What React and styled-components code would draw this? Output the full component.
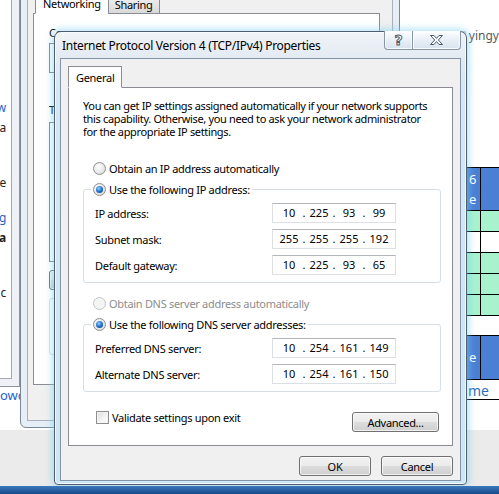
import React from "react";
import styled, { createGlobalStyle } from "styled-components";

const GlobalStyle = createGlobalStyle`
  * { box-sizing: border-box; }
  html, body { margin: 0; padding: 0; background: #ffffff; }
  body {
    font-family: "Noto Sans", "Liberation Sans", sans-serif;
    font-size: 11px;
    letter-spacing: -0.3px;
    color: #000;
  }
`;

const Desktop = styled.div`
  width: 499px;
  height: 494px;
  display: flex;
  flex-direction: column;
  overflow: hidden;
`;

const Workspace = styled.div`
  position: relative;
  flex: 1;
  display: flex;
  flex-direction: column;
  justify-content: flex-end;
  background: #ffffff;
  overflow: hidden;
`;

const GrayStrip = styled.div`
  height: 56px;
  background: #ebebeb;
`;

const Taskbar = styled.div`
  height: 8px;
  background: linear-gradient(#3b79be, #17498a);
`;

/* ---------- far left window ---------- */

const LeftWindow = styled.div`
  position: absolute;
  left: -120px;
  top: -20px;
  width: 140px;
  height: 407px;
  padding: 0 7px 7px 0;
  background: #eef2f6;
  border: 1px solid #8d949c;
`;

const LeftContent = styled.div`
  height: 100%;
  background: #fff;
  border-right: 1px solid #a3a9b0;
  border-bottom: 1px solid #a3a9b0;
  display: flex;
  flex-direction: column;
  align-items: flex-end;
  padding: 120px 5px 0 0;
`;

const Fragment = styled.div`
  margin-top: ${(p) => p.$gap}px;
  height: 14px;
  line-height: 14px;
  font-size: 12px;
  white-space: nowrap;
  color: ${(p) => (p.$link ? "#1e64c8" : "#222")};
  font-weight: ${(p) => (p.$bold ? 700 : 400)};
`;

const BottomLink = styled.div`
  position: absolute;
  left: 0;
  top: 386px;
  font-size: 13px;
  letter-spacing: 0;
  color: #1e64c8;
`;

/* ---------- networking properties window ---------- */

const NetWindow = styled.div`
  position: absolute;
  left: 20px;
  top: -40px;
  width: 380px;
  height: 468px;
  padding: 29px 6px 6px 6px;
  background: #e7eef5;
  border: 1px solid #7a8896;
  border-radius: 6px;
`;

const NetClient = styled.div`
  height: 100%;
  background: #f0f0f0;
  border: 1px solid #a7b1bc;
  padding: 1px 12px 35px 5px;
  display: flex;
  flex-direction: column;
`;

const TabRow = styled.div`
  display: flex;
  align-items: flex-end;
  padding-left: ${(p) => p.$indent ?? 2}px;
  margin-bottom: -1px;
  position: relative;
  z-index: 1;
`;

const Tab = styled.div`
  height: ${(p) => (p.$active ? 22 : 20)}px;
  padding: 0 ${(p) => (p.$active ? 7 : 6)}px;
  display: flex;
  align-items: center;
  border: 1px solid #898c95;
  border-bottom: ${(p) => (p.$active ? "1px solid #fff" : "1px solid #898c95")};
  background: ${(p) =>
    p.$active ? "#fff" : "linear-gradient(#f3f3f3, #e6e6e6 50%, #d9d9d9)"};
  margin-left: ${(p) => (p.$active ? 0 : -1)}px;
  white-space: nowrap;
`;

const NetPanel = styled.div`
  flex: 1;
  background: #fff;
  border: 1px solid #898c95;
  padding: 12px 12px 0 15px;
  display: flex;
  flex-direction: column;
`;

const Caption = styled.div`
  height: 14px;
  line-height: 14px;
  margin-top: ${(p) => p.$gap || 0}px;
  white-space: nowrap;
`;

const ListBox = styled.div`
  height: ${(p) => p.$h}px;
  margin-top: ${(p) => p.$gap}px;
  border: 1px solid #828790;
  background: #fff;
`;

const SmallButtonRow = styled.div`
  display: flex;
  gap: 6px;
  margin-top: 8px;
`;

const GroupOutline = styled.div`
  margin-top: 8px;
  height: 57px;
  border: 1px solid #d5dfe5;
  border-radius: 3px;
`;

/* ---------- right web page ---------- */

const WebPage = styled.div`
  position: absolute;
  left: 400px;
  top: 0;
  right: 0;
  height: 420px;
  background: #fff;
  padding: 29px 0 0 59px;
  display: flex;
  flex-direction: column;
`;

const UserLine = styled.div`
  display: flex;
  align-items: center;
  gap: 3px;
  height: 13px;
  padding-left: 3px;
  color: #5a5a5a;
  font-size: 12px;
  letter-spacing: 0;
  white-space: nowrap;
`;

const UserIcon = styled.span`
  width: 5px;
  height: 10px;
  background: #c9ced6;
  border-radius: 1px;
`;

const Table = styled.div`
  margin: ${(p) => p.$gap}px 0 0 3px;
  border-top: 1px solid #000;
  display: flex;
  flex-direction: column;
`;

const TableRow = styled.div`
  display: grid;
  grid-template-columns: 19px 1fr;
  height: ${(p) => p.$h}px;
  border-bottom: 1px solid #000;
  background: ${(p) => p.$bg};
`;

const Cell = styled.div`
  border-right: ${(p) => (p.$first ? "1px solid #000" : "none")};
  color: #fff;
  font-size: 13px;
  letter-spacing: 0;
  line-height: 20px;
  padding: ${(p) => p.$top ?? 1}px 0 0 7px;
`;

const PageLink = styled.div`
  margin: 4px 0 0 3px;
  padding-left: 6px;
  height: 16px;
  border-bottom: 1px solid #000;
  font-size: 14px;
  letter-spacing: 0;
  line-height: 14px;
  color: #2a6ebb;
`;

/* ---------- TCP/IPv4 dialog ---------- */

const Dialog = styled.div`
  position: absolute;
  left: 54px;
  top: 31px;
  width: 413px;
  height: 454px;
  padding: 0 5px 3px 5px;
  border: 1px solid #4e5f73;
  border-radius: 7px 7px 4px 4px;
  background: linear-gradient(
    180deg,
    #f1f4f8 0px,
    #e3eaf2 26px,
    #d3e7f4 60px,
    #cde6f5 100%
  );
  box-shadow: 0 0 7px 2px rgba(120, 205, 240, 0.55),
    inset 0 0 0 1px rgba(255, 255, 255, 0.75);
  display: flex;
  flex-direction: column;
`;

const TitleBar = styled.div`
  height: 27px;
  display: flex;
  justify-content: space-between;
  align-items: flex-start;
  padding-left: 2px;
`;

const Title = styled.div`
  font-size: 12px;
  line-height: 14px;
  margin-top: 7px;
  color: #000;
  white-space: nowrap;
`;

const CaptionButtons = styled.div`
  display: flex;
  margin-top: -1px;
`;

const CaptionButton = styled.div`
  width: ${(p) => p.$w}px;
  height: 19px;
  border: 1px solid #8696a8;
  border-top: none;
  margin-left: -1px;
  border-radius: ${(p) => (p.$last ? "0 0 4px 0" : "0 0 0 4px")};
  background: linear-gradient(
    180deg,
    rgba(255, 255, 255, 0.9),
    rgba(232, 239, 246, 0.85) 50%,
    rgba(214, 226, 238, 0.9)
  );
  box-shadow: inset 0 0 0 1px rgba(255, 255, 255, 0.8);
  display: flex;
  align-items: center;
  justify-content: center;
`;

const HelpGlyph = styled.span`
  font-family: "DejaVu Sans", sans-serif;
  font-weight: 700;
  font-size: 14px;
  line-height: 14px;
  color: #fff;
  -webkit-text-stroke: 1px #4a5a6d;
`;

const Client = styled.div`
  flex: 1;
  background: #f0f0f0;
  border: 1px solid #8494a6;
  padding: 7px 7px 4px 7px;
  display: flex;
  flex-direction: column;
`;

const Panel = styled.div`
  height: 359px;
  background: #fff;
  border: 1px solid #898c95;
  padding: 11px 11px 0 14px;
  display: flex;
  flex-direction: column;
`;

const Intro = styled.p`
  margin: 0;
  line-height: 13px;
  letter-spacing: -0.35px;
  white-space: nowrap;
`;

const OptionRow = styled.label`
  display: flex;
  align-items: center;
  gap: 3px;
  height: 14px;
  margin: ${(p) => p.$gap || 0}px 0 0 10px;
  color: ${(p) => (p.$disabled ? "#8d8d8d" : "#000")};
  white-space: nowrap;
`;

const Radio = styled.span`
  width: 13px;
  height: 13px;
  border-radius: 50%;
  border: 1px solid ${(p) => (p.$disabled ? "#c4c4c4" : "#8e8f8f")};
  background: ${(p) =>
    p.$disabled
      ? "#f4f4f4"
      : "radial-gradient(circle at 40% 35%, #ffffff, #e6e6e6 60%, #cfcfcf)"};
  display: flex;
  align-items: center;
  justify-content: center;
  flex: none;

  &::after {
    content: "";
    display: ${(p) => (p.$checked ? "block" : "none")};
    width: 7px;
    height: 7px;
    border-radius: 50%;
    background: radial-gradient(circle at 40% 35%, #8ad0ff, #1b6ac9 55%, #0d3f87);
  }
`;

const Group = styled.fieldset`
  margin: 7px 0 0 0;
  padding: 7px 44px 7px 11px;
  border: 1px solid #d5dfe5;
  border-radius: 3px;
  display: flex;
  flex-direction: column;
  gap: 6px;
`;

const Legend = styled.legend`
  padding: 0 2px;
  margin-left: -4px;
  height: 14px;
  display: flex;
  align-items: center;
  gap: 3px;
  white-space: nowrap;
`;

const FieldRow = styled.div`
  display: flex;
  justify-content: space-between;
  align-items: center;
  height: 20px;
`;

const AddressBox = styled.div`
  width: 124px;
  height: 20px;
  border: 1px solid #dcdfe4;
  border-top-color: #b2b5ba;
  background: #fff;
  padding-left: 3px;
  display: grid;
  grid-template-columns: 26px 4px 26px 4px 26px 4px 26px;
  align-items: center;
  text-align: center;
  line-height: 16px;
  letter-spacing: 0;
`;

const Dot = styled.span`
  text-align: center;
`;

const BottomRow = styled.div`
  margin-top: 19px;
  display: flex;
  justify-content: space-between;
  align-items: flex-start;
`;

const CheckRow = styled.label`
  display: flex;
  align-items: center;
  gap: 3px;
  height: 13px;
  margin-left: 13px;
  white-space: nowrap;
`;

const CheckBox = styled.span`
  width: 13px;
  height: 13px;
  border: 1px solid #8e8f8f;
  background: linear-gradient(135deg, #dcdcdc, #f5f5f5 60%, #ffffff);
  box-shadow: inset 0 0 0 1px #f4f4f4;
`;

const Button = styled.div`
  width: ${(p) => p.$w}px;
  height: 20px;
  margin-top: ${(p) => p.$top || 0}px;
  margin-right: ${(p) => p.$right || 0}px;
  border: 1px solid #707070;
  border-radius: 3px;
  background: linear-gradient(#f2f2f2 0%, #ebebeb 50%, #dddddd 51%, #cfcfcf 100%);
  box-shadow: inset 0 0 0 1px rgba(255, 255, 255, 0.7);
  display: flex;
  align-items: center;
  justify-content: center;
  white-space: nowrap;
`;

const ButtonRow = styled.div`
  margin-top: 10px;
  display: flex;
  justify-content: flex-end;
  gap: 10px;
`;

const leftFragments = [
  { text: "w", gap: 0, link: true },
  { text: "a", gap: 6 },
  { text: "e", gap: 41 },
  { text: "g", gap: 21, link: true },
  { text: "a", gap: 6, bold: true },
  { text: "c", gap: 41 },
];

const tableRows = [
  { h: 21, bg: "#a8f3cd" },
  { h: 21, bg: "#ffffff" },
  { h: 21, bg: "#a8f3cd" },
  { h: 21, bg: "#a8f3cd" },
  { h: 21, bg: "#a8f3cd" },
];

function Address({ value }) {
  const parts = value.split(".");
  return (
    <AddressBox>
      {parts.map((p, i) => (
        <React.Fragment key={i}>
          {i > 0 && <Dot>.</Dot>}
          <span>{p}</span>
        </React.Fragment>
      ))}
    </AddressBox>
  );
}

function CloseGlyph() {
  return (
    <svg width="15" height="12" viewBox="0 0 15 12">
      <path
        d="M1.5 1.5 H5 L7.5 4.4 L10 1.5 H13.5 L9.3 6 L13.5 10.5 H10 L7.5 7.6 L5 10.5 H1.5 L5.7 6 Z"
        fill="#fff"
        stroke="#4a5a6d"
        strokeWidth="1"
        strokeLinejoin="round"
      />
    </svg>
  );
}

export default function App() {
  return (
    <Desktop>
      <GlobalStyle />
      <Workspace>
        <GrayStrip />

        <WebPage>
          <UserLine>
            <UserIcon />
            yingy
          </UserLine>
          <Table $gap={125}>
            <TableRow $h={43} $bg="#4a7fd3">
              <Cell $first>
                6
                <br />e
              </Cell>
              <Cell />
            </TableRow>
            {tableRows.map((r, i) => (
              <TableRow key={i} $h={r.h} $bg={r.bg}>
                <Cell $first />
                <Cell />
              </TableRow>
            ))}
          </Table>
          <Table $gap={19}>
            <TableRow $h={44} $bg="#4a7fd3">
              <Cell $first $top={11}>e</Cell>
              <Cell />
            </TableRow>
          </Table>
          <PageLink>me</PageLink>
        </WebPage>

        <LeftWindow>
          <LeftContent>
            {leftFragments.map((f, i) => (
              <Fragment key={i} $gap={f.gap} $link={f.link} $bold={f.bold}>
                {f.text}
              </Fragment>
            ))}
          </LeftContent>
        </LeftWindow>
        <BottomLink>owd</BottomLink>

        <NetWindow>
          <NetClient>
            <TabRow>
              <Tab $active>Networking</Tab>
              <Tab>Sharing</Tab>
            </TabRow>
            <NetPanel>
              <Caption>Co</Caption>
              <ListBox $h={30} $gap={3} />
              <Caption $gap={30}>T</Caption>
              <ListBox $h={140} $gap={5} />
              <SmallButtonRow>
                <Button $w={90} />
                <Button $w={90} />
                <Button $w={90} />
              </SmallButtonRow>
              <GroupOutline />
            </NetPanel>
          </NetClient>
        </NetWindow>

        <Dialog>
          <TitleBar>
            <Title>Internet Protocol Version 4 (TCP/IPv4) Properties</Title>
            <CaptionButtons>
              <CaptionButton $w={29}>
                <HelpGlyph>?</HelpGlyph>
              </CaptionButton>
              <CaptionButton $w={49} $last>
                <CloseGlyph />
              </CaptionButton>
            </CaptionButtons>
          </TitleBar>
          <Client>
            <TabRow $indent={0}>
              <Tab $active>General</Tab>
            </TabRow>
            <Panel>
              <Intro>
                You can get IP settings assigned automatically if your network supports
                <br />
                this capability. Otherwise, you need to ask your network administrator
                <br />
                for the appropriate IP settings.
              </Intro>

              <OptionRow $gap={23}>
                <Radio />
                Obtain an IP address automatically
              </OptionRow>

              <Group>
                <Legend>
                  <Radio $checked />
                  Use the following IP address:
                </Legend>
                <FieldRow>
                  IP address:
                  <Address value="10.225.93.99" />
                </FieldRow>
                <FieldRow>
                  Subnet mask:
                  <Address value="255.255.255.192" />
                </FieldRow>
                <FieldRow>
                  Default gateway:
                  <Address value="10.225.93.65" />
                </FieldRow>
              </Group>

              <OptionRow $gap={13} $disabled>
                <Radio $disabled />
                Obtain DNS server address automatically
              </OptionRow>

              <Group>
                <Legend>
                  <Radio $checked />
                  Use the following DNS server addresses:
                </Legend>
                <FieldRow>
                  Preferred DNS server:
                  <Address value="10.254.161.149" />
                </FieldRow>
                <FieldRow>
                  Alternate DNS server:
                  <Address value="10.254.161.150" />
                </FieldRow>
              </Group>

              <BottomRow>
                <CheckRow>
                  <CheckBox />
                  Validate settings upon exit
                </CheckRow>
                <Button $w={87} $top={1} $right={2}>
                  Advanced...
                </Button>
              </BottomRow>
            </Panel>
            <ButtonRow>
              <Button $w={72}>OK</Button>
              <Button $w={72}>Cancel</Button>
            </ButtonRow>
          </Client>
        </Dialog>
      </Workspace>
      <Taskbar />
    </Desktop>
  );
}
